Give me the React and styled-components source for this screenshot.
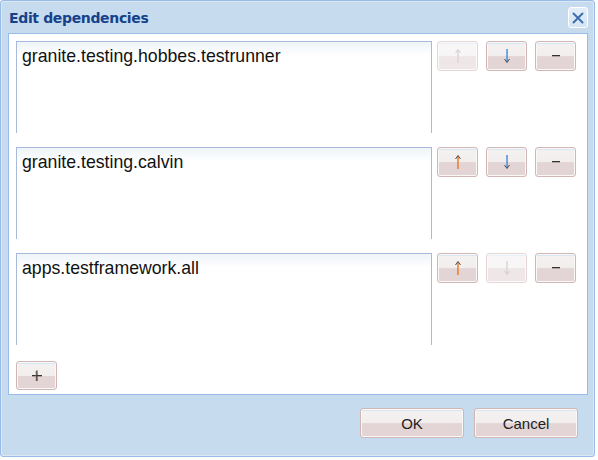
import React from "react";
import styled, { createGlobalStyle } from "styled-components";

const Global = createGlobalStyle`
  html, body { margin: 0; padding: 0; background: #ffffff; }
  body { width: 598px; height: 460px; overflow: hidden; }
`;

const Window = styled.div`
  box-sizing: border-box;
  width: 595px;
  height: 457px;
  background: #c6dcee;
  border: 1px solid #99bbe8;
  border-radius: 3px;
  box-shadow: inset 0 0 0 1px #dbe9f5;
  display: flex;
  flex-direction: column;
  padding: 0 6px 0 7px;
  font-family: "Liberation Sans", Arial, sans-serif;
`;

const Header = styled.div`
  height: 32px;
  display: flex;
  align-items: center;
  justify-content: space-between;
`;

const Title = styled.div`
  font-family: "DejaVu Sans", Tahoma, sans-serif;
  font-weight: bold;
  font-size: 14px;
  letter-spacing: -0.35px;
  color: #15428b;
  padding-left: 1px;
  padding-top: 1px;
`;

const Close = styled.div`
  box-sizing: border-box;
  width: 20px;
  height: 21px;
  margin-top: 1px;
  border: 1px solid #ffffff;
  border-radius: 3px;
  background: linear-gradient(#e4eef8, #d4e4f3);
  display: flex;
  align-items: center;
  justify-content: center;
`;

const Body = styled.div`
  box-sizing: border-box;
  height: 362px;
  background: #ffffff;
  border: 1px solid #99bbe8;
  padding: 7px 0 0 7px;
  display: flex;
  flex-direction: column;
`;

const Row = styled.div`
  display: flex;
  align-items: flex-start;
  height: 92px;
  margin-bottom: 14px;
`;

const Field = styled.div`
  box-sizing: border-box;
  width: 416px;
  height: 92px;
  border: 1px solid #a9b9dc;
  border-bottom: none;
  background: linear-gradient(#eef4f8 0px, #ffffff 14px);
  padding: 4px 5px;
  font-size: 17.7px;
  color: #111;
  margin-right: 5px;
`;

const Buttons = styled.div`
  display: flex;
  gap: 8px;
`;

const Btn = styled.button`
  box-sizing: border-box;
  width: ${(p) => p.$w || 41}px;
  height: ${(p) => p.$h || 30}px;
  border: 1px solid #d1b6b6;
  border-radius: 3px;
  padding: 0;
  background: linear-gradient(
    #f4f1f1 0%,
    #f2eeee 50%,
    #e3d5d5 52%,
    #e3d5d5 100%
  );
  box-shadow: inset 0 0 0 1px #fbf8f8, inset 0 2px 0 0 #d6e6f5;
  display: flex;
  align-items: center;
  justify-content: center;
  font-family: "Liberation Sans", Arial, sans-serif;
  font-size: 15px;
  color: #222;
  opacity: ${(p) => (p.$disabled ? 0.55 : 1)};
`;

const Footer = styled.div`
  flex: 1;
  display: flex;
  justify-content: flex-end;
  align-items: flex-start;
  gap: 10px;
  padding-top: 13px;
  padding-right: 10px;
`;

const AddRow = styled.div`
  display: flex;
  margin-top: 2px;
`;

const Arrow = ({ dir, disabled }) => {
  const up = dir === "up";
  const shaft = disabled ? "#b8b8b8" : up ? "#f07a1e" : "#5a9ae0";
  const head = disabled ? "#a0a0a0" : "#3a3a3a";
  return (
    <svg width="8" height="16" viewBox="0 0 8 16">
      {up ? (
        <>
          <rect x="3.5" y="2" width="1.2" height="13" fill={shaft} />
          <rect x="3" y="3" width="0.8" height="12" fill={disabled ? shaft : "#5a9ae0"} opacity="0.6" />
          <path d="M1.5 5 L4 1.5 L6.5 5" fill="none" stroke={head} strokeWidth="0.9" />
        </>
      ) : (
        <>
          <rect x="3.2" y="1" width="1.2" height="13" fill={shaft} />
          <rect x="4.2" y="1" width="0.8" height="12" fill={disabled ? shaft : "#3060a0"} opacity="0.5" />
          <path d="M1.5 11 L4 14.5 L6.5 11" fill="none" stroke={head} strokeWidth="0.9" />
        </>
      )}
    </svg>
  );
};

const Minus = () => (
  <svg width="10" height="4" viewBox="0 0 10 4">
    <rect x="1" y="1" width="8" height="1.3" fill="#333" />
  </svg>
);

const Plus = () => (
  <svg width="12" height="12" viewBox="0 0 12 12">
    <rect x="1" y="5" width="10" height="1.3" fill="#333" />
    <rect x="5.2" y="0.5" width="1.3" height="10.5" fill="#333" />
    <rect x="4.5" y="1" width="0.7" height="10" fill="#e08030" opacity="0.7" />
  </svg>
);

const items = [
  { name: "granite.testing.hobbes.testrunner", upDisabled: true, downDisabled: false },
  { name: "granite.testing.calvin", upDisabled: false, downDisabled: false },
  { name: "apps.testframework.all", upDisabled: false, downDisabled: true },
];

export default function App() {
  return (
    <>
      <Global />
      <Window>
        <Header>
          <Title>Edit dependencies</Title>
          <Close>
            <svg width="14" height="14" viewBox="0 0 14 14">
              <path d="M2.5 2.5 L11.5 11.5 M11.5 2.5 L2.5 11.5" stroke="#3d6fb0" strokeWidth="2" strokeLinecap="round" />
            </svg>
          </Close>
        </Header>
        <Body>
          {items.map((it) => (
            <Row key={it.name}>
              <Field>{it.name}</Field>
              <Buttons>
                <Btn $disabled={it.upDisabled}>
                  <Arrow dir="up" disabled={it.upDisabled} />
                </Btn>
                <Btn $disabled={it.downDisabled}>
                  <Arrow dir="down" disabled={it.downDisabled} />
                </Btn>
                <Btn>
                  <Minus />
                </Btn>
              </Buttons>
            </Row>
          ))}
          <AddRow>
            <Btn $h={29}>
              <Plus />
            </Btn>
          </AddRow>
        </Body>
        <Footer>
          <Btn $w={104}>OK</Btn>
          <Btn $w={104}>Cancel</Btn>
        </Footer>
      </Window>
    </>
  );
}
